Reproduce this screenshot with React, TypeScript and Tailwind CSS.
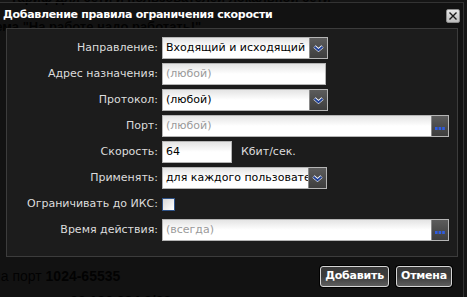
import type { ReactNode } from "react";

const ui = "font-['DejaVu_Sans','Verdana',sans-serif]";

function ArrowButton() {
  return (
    <div className="w-[18px] h-full flex items-center justify-center bg-gradient-to-b from-[#5c5c5c] to-[#3e3e3e] border-l border-[#8a8a8a]">
      <svg width="11" height="7" viewBox="0 0 11 7">
        <polyline points="1.5,1.5 5.5,5 9.5,1.5" fill="none" stroke="#ffffff" strokeWidth="3.2" />
        <polyline points="1.5,1.8 5.5,5.3 9.5,1.8" fill="none" stroke="#1e3f96" strokeWidth="1.8" />
      </svg>
    </div>
  );
}

function DotsButton() {
  return (
    <div className="w-[17px] h-full flex items-end justify-center pb-[6px] bg-gradient-to-b from-[#5c5c5c] to-[#3e3e3e] border-l border-[#8a8a8a]">
      <svg width="10" height="3" viewBox="0 0 10 3">
        <rect x="0" y="0" width="2.6" height="3" fill="#2f5ce0" />
        <rect x="3.6" y="0" width="2.6" height="3" fill="#2f5ce0" />
        <rect x="7.2" y="0" width="2.6" height="3" fill="#2f5ce0" />
      </svg>
    </div>
  );
}

function Field({
  width,
  text,
  placeholder,
  right,
}: {
  width: string;
  text?: string;
  placeholder?: string;
  right?: ReactNode;
}) {
  return (
    <div className={`${width} h-[22px] flex border border-[#b5b5b5] bg-gradient-to-b from-[#e4e4e4] via-white to-white`}>
      <div className="flex-1 flex items-center pl-[3px] overflow-hidden whitespace-nowrap text-[11px]">
        {text ? <span className="text-black">{text}</span> : <span className="text-[#9a9a9a]">{placeholder}</span>}
      </div>
      {right}
    </div>
  );
}

function Row({ label, children }: { label: string; children: ReactNode }) {
  return (
    <>
      <div className="h-[22px] flex items-center justify-end text-[11px] text-[#dcdcdc] whitespace-nowrap">{label}</div>
      <div className="h-[22px] flex items-center">{children}</div>
    </>
  );
}

function DarkButton({ children }: { children: ReactNode }) {
  return (
    <div className="h-[21px] px-[4px] flex items-center rounded-[3px] border border-[#d6d6d6] bg-gradient-to-b from-[#3a3a3a] via-[#3c3c3c] to-[#5e5e5e] text-white font-bold text-[11px] tracking-[-0.2px] shadow-[0_0_0_1px_#000]">
      {children}
    </div>
  );
}

export default function App() {
  return (
    <div className={`relative w-[467px] h-[297px] overflow-hidden bg-[#151515] ${ui}`}>
      {/* page behind the dialog */}
      <div className="flex flex-col text-[#030303] font-['Liberation_Sans',sans-serif]">
        <div className="h-[29px] -mt-[12px] ml-[10px] text-[13px] font-bold whitespace-nowrap">Тариф для сети и пользователей локальной сети</div>
        <div className="h-[16px] -ml-[12px] text-[13px] font-bold whitespace-nowrap">Тема "На работе надо работать!"</div>
        <div className="flex flex-col -ml-[22px] text-[13px] leading-[15px]">
          <span>Аі</span>
          <span>Вс</span>
          <span>Аі</span>
          <span>Вс</span>
          <span>Аі</span>
          <span>Вс</span>
          <span>Аі</span>
          <span>Вс</span>
          <span>Аі</span>
          <span>Вс</span>
          <span>Аі</span>
          <span>Вс</span>
          <span>Аі</span>
        </div>
        <div className="mt-[38px] -ml-[7px] text-[14px] whitespace-nowrap">
          на порт <b>1024-65535</b>
        </div>
        <div className="mt-[4px] -ml-[12px] text-[14px] whitespace-nowrap">
          сеть адреса <b>93.186.224.0/22</b>
        </div>
      </div>

      {/* dialog */}
      <div className="absolute left-0 top-[2px] right-[3px] bottom-[-20px] bg-black/10 border-t border-r border-[#333333] flex flex-col pl-[6px] pr-[5px]">
        <div className="h-[25px] -ml-[3px] flex items-center justify-between">
          <span className="text-white font-bold text-[11px] tracking-[-0.3px]">Добавление правила ограничения скорости</span>
          <div className="w-[14px] h-[14px] -mr-[2px] flex items-center justify-center rounded-[2px] border border-[#8c8c8c] bg-gradient-to-b from-[#e6e6e6] to-[#bdbdbd]">
            <svg width="10" height="10" viewBox="0 0 10 10">
              <path d="M1.5 1.5 L8.5 8.5 M8.5 1.5 L1.5 8.5" stroke="#1a1a1a" strokeWidth="1.4" />
            </svg>
          </div>
        </div>

        <div className="border border-[#3c3c3c] bg-[#1c1c1c] pt-[8px] pb-[15px] pl-[1px]">
          <div className="grid grid-cols-[150px_1fr] gap-x-[4px] gap-y-[4px]">
            <Row label="Направление:">
              <Field width="w-[166px]" text="Входящий и исходящий" right={<ArrowButton />} />
            </Row>
            <Row label="Адрес назначения:">
              <Field width="w-[164px]" placeholder="(любой)" />
            </Row>
            <Row label="Протокол:">
              <Field width="w-[166px]" text="(любой)" right={<ArrowButton />} />
            </Row>
            <Row label="Порт:">
              <Field width="w-[287px]" placeholder="(любой)" right={<DotsButton />} />
            </Row>
            <Row label="Скорость:">
              <Field width="w-[70px]" text="64" />
              <span className="ml-[9px] text-[11px] text-[#dcdcdc]">Кбит/сек.</span>
            </Row>
            <Row label="Применять:">
              <Field width="w-[165px]" text="для каждого пользователя" right={<ArrowButton />} />
            </Row>
            <Row label="Ограничивать до ИКС:">
              <div className="w-[13px] h-[13px] mt-[1px] border border-[#2f5388] bg-gradient-to-br from-[#d8d8d8] to-white" />
            </Row>
            <Row label="Время действия:">
              <Field width="w-[287px]" placeholder="(всегда)" right={<DotsButton />} />
            </Row>
          </div>
        </div>

        <div className="mt-[9px] flex justify-end gap-[7px] pr-[6px]">
          <DarkButton>Добавить</DarkButton>
          <DarkButton>Отмена</DarkButton>
        </div>
      </div>
    </div>
  );
}
